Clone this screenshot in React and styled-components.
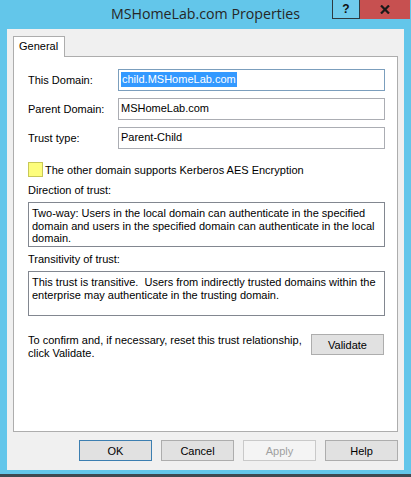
import React from 'react';
import styled, { createGlobalStyle } from 'styled-components';

const GlobalStyle = createGlobalStyle`
  html, body {
    margin: 0;
    padding: 0;
    background: #63c6ea;
  }
  body {
    font-family: 'Liberation Sans', Arial, sans-serif;
    font-size: 11px;
    color: #000;
  }
`;

const Window = styled.div`
  width: 411px;
  height: 477px;
  background: #63c6ea;
  display: flex;
  flex-direction: column;
  box-sizing: border-box;
  border-bottom: 3px solid #3d4a52;
`;

const TitleBar = styled.div`
  height: 29px;
  display: grid;
  grid-template-columns: 1fr auto 1fr;
  align-items: start;
`;

const Title = styled.div`
  grid-column: 2;
  padding-top: 4px;
  font-family: 'Open Sans', 'Noto Sans', sans-serif;
  font-size: 14.2px;
  color: #262626;
  white-space: nowrap;
`;

const Caption = styled.div`
  grid-column: 3;
  justify-self: end;
  display: flex;
  margin-right: 1px;
`;

const CaptionButton = styled.div`
  height: 19px;
  width: ${p => p.$wide ? '50px' : '28px'};
  box-sizing: border-box;
  display: flex;
  align-items: center;
  justify-content: center;
  font-family: 'Liberation Sans', Arial, sans-serif;
  font-weight: bold;
  font-size: 12px;
  color: #111;
  background: ${p => p.$close ? '#c75050' : '#6fcbec'};
  border: ${p => p.$close ? 'none' : '1px solid #2e3a40'};
  border-top: none;
`;

const Client = styled.div`
  flex: 1;
  margin: 0 7px 4px 7px;
  background: #f0f0f0;
  display: flex;
  flex-direction: column;
  padding: 7px 6px 0 6px;
`;

const TabStrip = styled.div`
  display: flex;
  height: 20px;
`;

const Tab = styled.div`
  width: 52px;
  box-sizing: border-box;
  background: #fff;
  border: 1px solid #adadad;
  border-bottom: none;
  padding: 3px 0 0 5px;
  position: relative;
  z-index: 1;
  height: 21px;
`;

const Panel = styled.div`
  height: 376px;
  box-sizing: border-box;
  background: #fff;
  border: 1px solid #adadad;
  padding: 12px 12px 0 14px;
  display: flex;
  flex-direction: column;
`;

const FieldRow = styled.div`
  display: flex;
  align-items: center;
  margin-bottom: ${p => p.$gap ?? 7}px;
`;

const Label = styled.div`
  width: 90px;
`;

const Input = styled.div`
  flex: 1;
  height: 22px;
  box-sizing: border-box;
  border: 1px solid ${p => p.$focus ? '#7b9ebd' : '#abadb3'};
  padding: 3px 0 0 2px;
  white-space: nowrap;
`;

const Selected = styled.span`
  background: #3399ff;
  color: #fff;
  padding: 1px 1px 2px 1px;
`;

const CheckRow = styled.div`
  display: flex;
  align-items: center;
  gap: 2px;
  margin-top: 13px;
`;

const CheckBox = styled.div`
  width: 15px;
  height: 15px;
  box-sizing: border-box;
  background: #fdfd7c;
  border: 1px solid #c8c858;
`;

const SectionLabel = styled.div`
  margin-top: ${p => p.$top}px;
  margin-bottom: 6px;
`;

const InfoBox = styled.div`
  height: 45px;
  box-sizing: border-box;
  border: 1px solid #828790;
  padding: 4px 3px 0 3px;
  line-height: 12.5px;
`;

const ValidateRow = styled.div`
  display: flex;
  justify-content: space-between;
  align-items: flex-start;
  margin-top: 18px;
`;

const Note = styled.div`
  line-height: 13px;
`;

const Button = styled.div`
  width: 73px;
  height: 21px;
  box-sizing: border-box;
  display: flex;
  align-items: center;
  justify-content: center;
  background: ${p => p.$disabled ? '#f4f4f4' : '#e1e1e1'};
  border: 1px solid ${p => p.$default ? '#3c7fb1' : p.$disabled ? '#c9c9c9' : '#adadad'};
  color: ${p => p.$disabled ? '#a0a0a0' : '#000'};
`;

const ValidateButton = styled(Button)`
  margin-right: 1px;
`;

const ButtonBar = styled.div`
  display: flex;
  justify-content: flex-end;
  gap: 9px;
  padding: 8px 0 0 0;
`;

export default function App() {
  return (
    <>
      <GlobalStyle />
      <Window>
        <TitleBar>
          <Title>MSHomeLab.com Properties</Title>
          <Caption>
            <CaptionButton>?</CaptionButton>
            <CaptionButton $close $wide>
              <svg width="10" height="9" viewBox="0 0 10 9">
                <path d="M1 0.5 L9 8.5 M9 0.5 L1 8.5" stroke="#1a1a1a" strokeWidth="2.2" />
              </svg>
            </CaptionButton>
          </Caption>
        </TitleBar>
        <Client>
          <TabStrip>
            <Tab>General</Tab>
          </TabStrip>
          <Panel>
            <FieldRow>
              <Label>This Domain:</Label>
              <Input $focus><Selected>child.MSHomeLab.com</Selected></Input>
            </FieldRow>
            <FieldRow>
              <Label>Parent Domain:</Label>
              <Input>MSHomeLab.com</Input>
            </FieldRow>
            <FieldRow $gap={0}>
              <Label>Trust type:</Label>
              <Input>Parent-Child</Input>
            </FieldRow>
            <CheckRow>
              <CheckBox />
              <span>The other domain supports Kerberos AES Encryption</span>
            </CheckRow>
            <SectionLabel $top={7}>Direction of trust:</SectionLabel>
            <InfoBox>
              Two-way: Users in the local domain can authenticate in the specified
              domain and users in the specified domain can authenticate in the local
              domain.
            </InfoBox>
            <SectionLabel $top={6}>Transitivity of trust:</SectionLabel>
            <InfoBox>
              This trust is transitive.&nbsp; Users from indirectly trusted domains within the
              enterprise may authenticate in the trusting domain.
            </InfoBox>
            <ValidateRow>
              <Note>
                To confirm and, if necessary, reset this trust relationship,<br />
                click Validate.
              </Note>
              <ValidateButton>Validate</ValidateButton>
            </ValidateRow>
          </Panel>
          <ButtonBar>
            <Button $default>OK</Button>
            <Button>Cancel</Button>
            <Button $disabled>Apply</Button>
            <Button>Help</Button>
          </ButtonBar>
        </Client>
      </Window>
    </>
  );
}
